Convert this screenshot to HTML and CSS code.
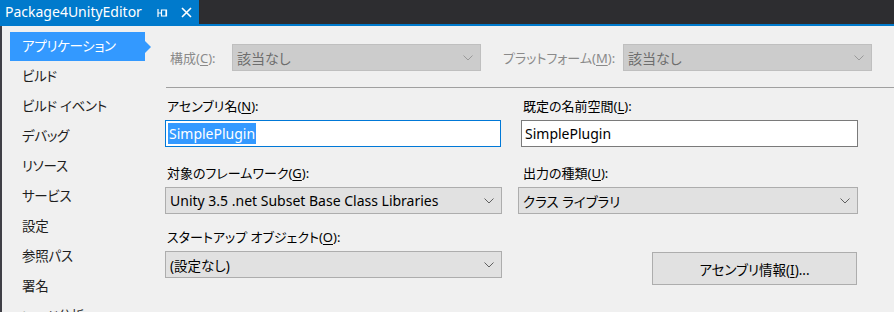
FILE: index.html
```html
<!DOCTYPE html>
<html lang="ja">
<head>
    <meta charset="UTF-8">
    <title>Package4UnityEditor</title>
    <link rel="stylesheet" href="styles.css">
</head>
<body>
    <div class="tabstrip">
        <div class="tab">
            <span class="tab-title">Package4UnityEditor</span>
            <svg class="tab-pin" width="11" height="10" viewBox="0 0 11 10">
                <path d="M1 1V9M1 5H4.5M4.5 2H9.5V8H4.5Z M9 2V8" fill="none" stroke="#fff" stroke-width="1.2"/>
            </svg>
            <svg class="tab-close" width="11" height="11" viewBox="0 0 11 11">
                <path d="M1 1L10 10M10 1L1 10" stroke="#fff" stroke-width="1.6"/>
            </svg>
        </div>
    </div>

    <div class="page">
        <nav class="sidebar">
            <div class="nav-item active">アプリケーション</div>
            <div class="nav-item">ビルド</div>
            <div class="nav-item">ビルド イベント</div>
            <div class="nav-item">デバッグ</div>
            <div class="nav-item">リソース</div>
            <div class="nav-item">サービス</div>
            <div class="nav-item">設定</div>
            <div class="nav-item">参照パス</div>
            <div class="nav-item">署名</div>
            <div class="nav-item">コード分析</div>
        </nav>

        <main class="content">
            <div class="config-row">
                <span class="cfg-label">構成(<u>C</u>):</span>
                <div class="combo disabled">
                    <span>該当なし</span>
                    <svg class="chevron" width="10" height="6" viewBox="0 0 10 6"><path d="M0.5 0.5L5 5L9.5 0.5" fill="none" stroke="#9a9a9a"/></svg>
                </div>
                <span class="cfg-label platform">プラットフォーム(<u>M</u>):</span>
                <div class="combo disabled">
                    <span>該当なし</span>
                    <svg class="chevron" width="10" height="6" viewBox="0 0 10 6"><path d="M0.5 0.5L5 5L9.5 0.5" fill="none" stroke="#9a9a9a"/></svg>
                </div>
            </div>

            <div class="sep"></div>

            <div class="fields">
                <div class="field">
                    <div class="field-label">アセンブリ名(<u>N</u>):</div>
                    <div class="textbox focused"><span class="selected">SimplePlugin</span></div>
                </div>
                <div class="field col2">
                    <div class="field-label">既定の名前空間(<u>L</u>):</div>
                    <div class="textbox">SimplePlugin</div>
                </div>

                <div class="field">
                    <div class="field-label">対象のフレームワーク(<u>G</u>):</div>
                    <div class="combo latin">
                        <span>Unity 3.5 .net Subset Base Class Libraries</span>
                        <svg class="chevron" width="10" height="6" viewBox="0 0 10 6"><path d="M0.5 0.5L5 5L9.5 0.5" fill="none" stroke="#606060"/></svg>
                    </div>
                </div>
                <div class="field col2">
                    <div class="field-label">出力の種類(<u>U</u>):</div>
                    <div class="combo">
                        <span>クラス ライブラリ</span>
                        <svg class="chevron" width="10" height="6" viewBox="0 0 10 6"><path d="M0.5 0.5L5 5L9.5 0.5" fill="none" stroke="#606060"/></svg>
                    </div>
                </div>

                <div class="field">
                    <div class="field-label">スタートアップ オブジェクト(<u>O</u>):</div>
                    <div class="combo">
                        <span>(設定なし)</span>
                        <svg class="chevron" width="10" height="6" viewBox="0 0 10 6"><path d="M0.5 0.5L5 5L9.5 0.5" fill="none" stroke="#606060"/></svg>
                    </div>
                </div>
                <div class="field col2">
                    <button class="info-button">アセンブリ情報(<u>I</u>)...</button>
                </div>
            </div>
        </main>
    </div>
</body>
</html>
```

FILE: styles.css
```css
:root {
    --vs-blue: #007acc;
    --select: #3399ff;
    --panel: #f0f0f0;
    --dark: #2d2d30;
    --ctl-bg: #e1e1e1;
    --ctl-border: #adadad;
}
html, body {
    margin: 0;
    height: 312px;
    overflow: hidden;
}
body {
    background: var(--panel);
    font-family: "Noto Sans", "Noto Sans CJK JP", sans-serif;
    font-size: 13px;
    font-feature-settings: "palt";
    color: #000;
}
u {
    text-underline-offset: 2px;
}

/* tab strip */
.tabstrip {
    height: 24px;
    background: var(--dark);
    border-bottom: 2px solid var(--vs-blue);
    display: flex;
}
.tab {
    width: 199px;
    background: var(--vs-blue);
    display: flex;
    align-items: center;
    color: #fff;
}
.tab-title {
    font-size: 14px;
    width: 151px;
    box-sizing: border-box;
    padding-left: 5px;
    line-height: 24px;
    white-space: nowrap;
}
.tab-pin {
    margin-left: 6px;
    margin-top: 1px;
}
.tab-close {
    margin-left: 13px;
}

/* layout */
.page {
    display: flex;
    height: 286px;
}
.sidebar {
    width: 155px;
    margin-right: 10px;
    border-left: 2px solid #3f3f46;
    padding: 6px 0 0 8px;
    box-sizing: border-box;
    flex-shrink: 0;
}
.nav-item {
    height: 30px;
    line-height: 29px;
    padding-left: 12px;
    width: 135px;
    box-sizing: border-box;
    color: #1e1e1e;
    font-size: 13.5px;
    letter-spacing: -0.3px;
    white-space: nowrap;
    position: relative;
}
.nav-item.active {
    background: var(--select);
    color: #fff;
    height: 29px;
    margin-bottom: 1px;
}
.nav-item.active::after {
    content: "";
    position: absolute;
    right: -6px;
    top: 9px;
    border-top: 6px solid transparent;
    border-bottom: 6px solid transparent;
    border-left: 6px solid var(--select);
}
.content {
    flex: 1;
    padding-top: 18px;
}

/* configuration row */
.config-row {
    display: flex;
    align-items: center;
    height: 27px;
}
.cfg-label {
    color: #8a8a8a;
    width: 62px;
    padding-left: 5px;
    white-space: nowrap;
    flex-shrink: 0;
}
.cfg-label.platform {
    width: 120px;
    padding-left: 22px;
}
.combo {
    height: 27px;
    box-sizing: border-box;
    background: var(--ctl-bg);
    border: 1px solid var(--ctl-border);
    display: flex;
    align-items: center;
    justify-content: space-between;
    padding: 0 7px 0 4px;
    font-size: 13.5px;
    white-space: nowrap;
}
.combo.latin {
    font-size: 14px;
}
.combo.disabled {
    width: 249px;
    flex-shrink: 0;
    background: #cccccc;
    border-color: #bfbfbf;
    color: #6d6d6d;
    font-size: 14px;
}
.chevron {
    flex-shrink: 0;
}
.sep {
    height: 1px;
    background: #a0a0a0;
    margin: 16px 0 7px 1px;
}

/* fields */
.fields {
    display: grid;
    grid-template-columns: 337px 340px;
    column-gap: 16px;
    row-gap: 12px;
}
.field {
    display: flex;
    flex-direction: column;
}
.field-label {
    height: 22px;
    line-height: 22px;
    margin-bottom: 3px;
    padding-left: 2px;
    white-space: nowrap;
}
.col2 .field-label {
    padding-left: 5px;
}
.textbox {
    height: 27px;
    box-sizing: border-box;
    background: #fff;
    border: 1px solid #7a7a7a;
    padding: 0 3px;
    margin-bottom: 3px;
    line-height: 25px;
    font-size: 14px;
}
.col2 .textbox {
    margin-left: 3px;
}
.textbox.focused {
    border-color: #0078d7;
    width: 336px;
    padding-left: 2px;
}
.selected {
    background: var(--select);
    color: #fff;
    display: inline-block;
    line-height: 21px;
    padding: 0 1px;
}
.info-button {
    width: 205px;
    height: 33px;
    margin: 26px 0 0 134px;
    background: var(--ctl-bg);
    border: 1px solid var(--ctl-border);
    font-family: inherit;
    font-size: 13.5px;
    font-feature-settings: "palt";
    color: #000;
    padding: 0;
}
```
